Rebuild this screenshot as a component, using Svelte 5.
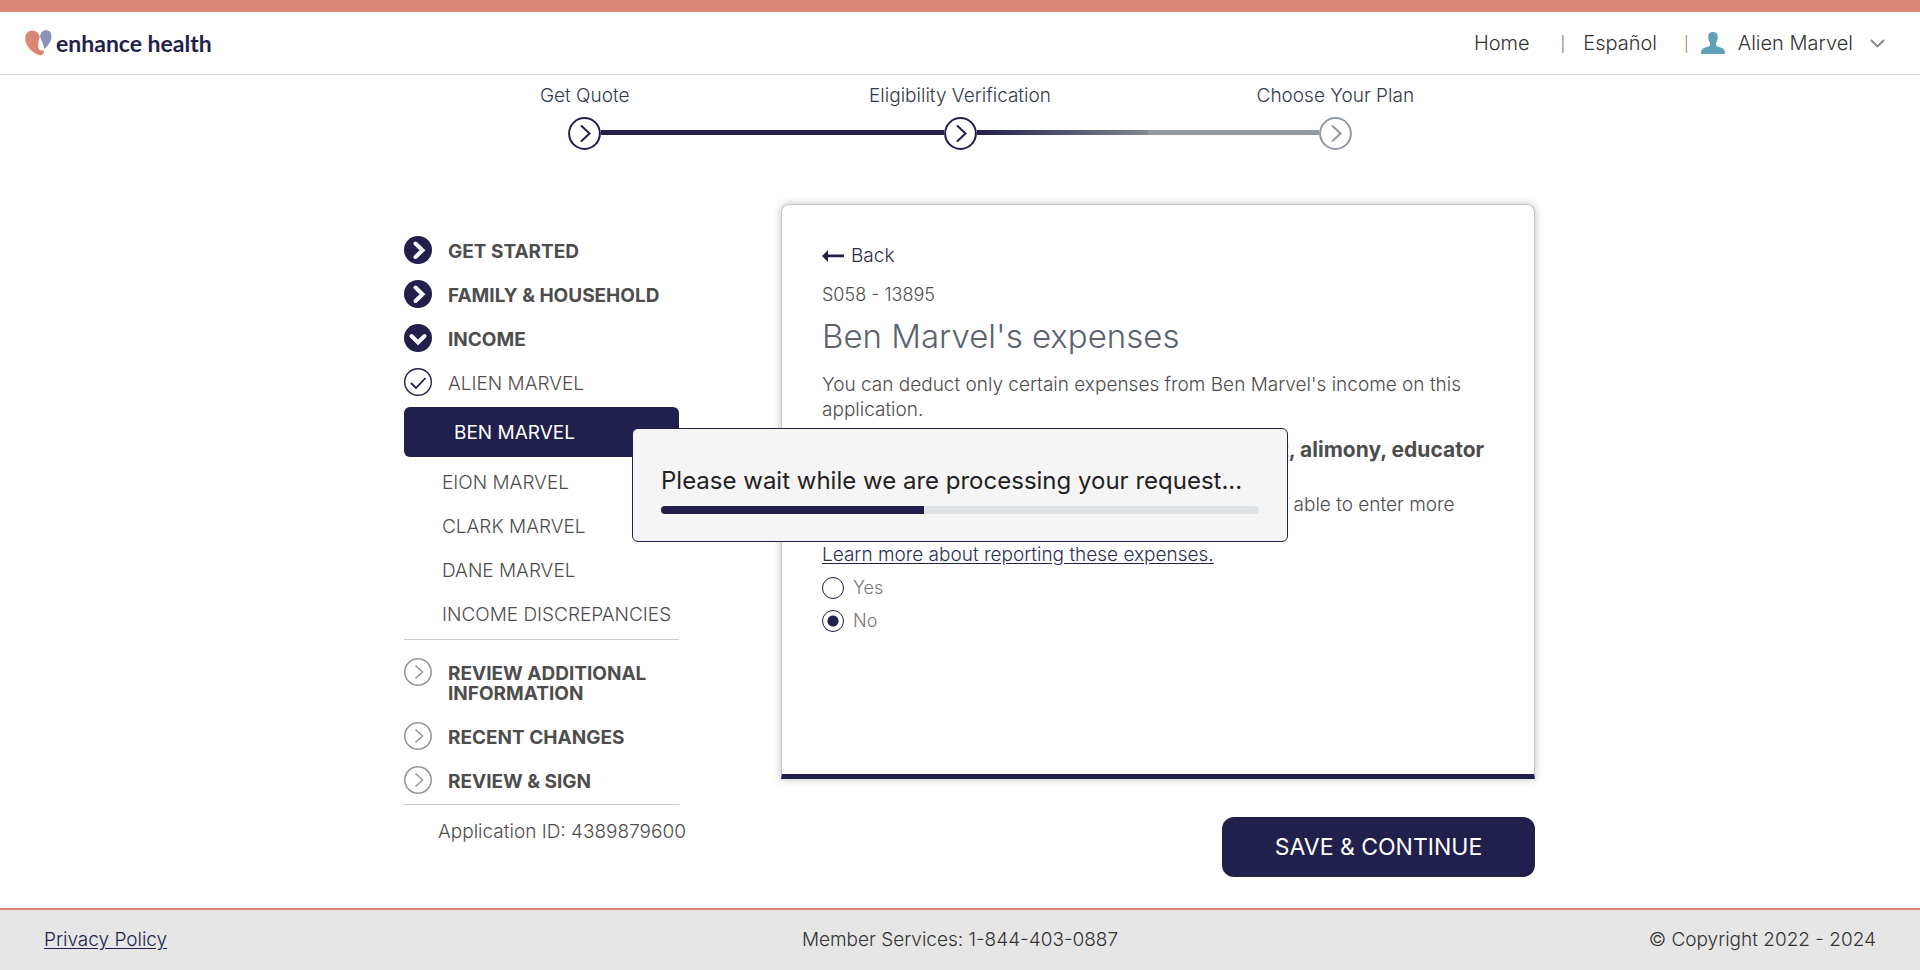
<script>
  const steps = [
    { label: 'Get Quote', state: 'done' },
    { label: 'Eligibility Verification', state: 'current' },
    { label: 'Choose Your Plan', state: 'todo' }
  ];
  const doneSections = [
    { label: 'GET STARTED', open: false },
    { label: 'FAMILY & HOUSEHOLD', open: false },
    { label: 'INCOME', open: true }
  ];
  const members = ['EION MARVEL', 'CLARK MARVEL', 'DANE MARVEL', 'INCOME DISCREPANCIES'];
  const nextSections = ['REVIEW ADDITIONAL INFORMATION', 'RECENT CHANGES', 'REVIEW & SIGN'];
  const progress = 44;
  let answer = $state('no');
</script>

<div class="page">
  <header class="header">
    <a class="logo" href="#home">
      <svg width="27" height="26" viewBox="0 0 27 26" aria-hidden="true">
        <path d="M7.500 .5C3 .5 .2 3.800 .2 8.500C.2 15.500 7 23 14 25C17.500 25.900 19.500 24 18.800 19.800C17.500 21 15.500 21 14 19C12 15.500 14 11 14.800 6.500C13.500 2.500 11 .5 7.500 .5Z" fill="#da8675" />
        <path d="M21 .2C17.500 .2 15.600 2.500 15 6.500C16.500 10.500 18.500 14 19.200 19C23.500 15.500 26.500 11 26.500 6C26.500 2.500 24.500 .2 21 .2Z" fill="#8b91b7" />
      </svg>
      <span>enhance health</span>
    </a>
    <nav class="top-nav" aria-label="Account">
      <a href="#home">Home</a>
      <span class="bar">|</span>
      <a href="#es">Español</a>
      <span class="bar second">|</span>
      <button class="user" type="button">
        <svg width="24" height="22" viewBox="0 0 24 22" aria-hidden="true">
          <path d="M12 0C8.800 0 7.200 1.800 7.200 4.800C7.200 7.500 8 9.500 9 10.800V13.200C8.800 14 7.800 14.300 6.500 14.800C3 16 .3 16.600 0 20.200V22H24V20.200C23.700 16.600 21 16 17.500 14.800C16.200 14.300 15.200 14 15 13.200V10.800C16 9.500 16.800 7.500 16.800 4.800C16.800 1.800 15.200 0 12 0Z" fill="#63a1b9" />
        </svg>
        <span>Alien Marvel</span>
        <svg width="15" height="9" viewBox="0 0 15 9" aria-hidden="true">
          <path d="M1 1L7.500 7.400L14 1" fill="none" stroke="#888" stroke-width="2" />
        </svg>
      </button>
    </nav>
  </header>

  <main class="main">
    <ol class="steps">
      {#each steps as step}
        <li class="step {step.state}">
          <span class="step-label">{step.label}</span>
          <div class="track">
            <i class="line before"></i>
            <svg width="33" height="33" viewBox="0 0 33 33" aria-hidden="true">
              <circle cx="16.500" cy="16.500" r="15.400" fill="#fff" stroke="currentColor" stroke-width="2" />
              <path d="M13.500 9L21.500 16.500L13.500 24" fill="none" stroke="currentColor" stroke-width="2" stroke-linecap="round" />
            </svg>
            <i class="line after"></i>
          </div>
        </li>
      {/each}
    </ol>

    <div class="content">
      <nav class="sidebar" aria-label="Application sections">
        <ul class="group">
          {#each doneSections as section}
            <li>
              <a class="row section" href="#section">
                <svg width="28" height="28" viewBox="0 0 28 28" aria-hidden="true">
                  <circle cx="14" cy="14" r="14" fill="#211f4b" />
                  <path d={section.open ? 'M7.500 12L14 18.500L20.500 12' : 'M11.500 7.500L18.500 14.300L11.500 21'} fill="none" stroke="#fff" stroke-width="4" stroke-linecap="round" />
                </svg>
                <span>{section.label}</span>
              </a>
            </li>
          {/each}
          <li>
            <a class="row" href="#member">
              <svg width="28" height="28" viewBox="0 0 28 28" aria-hidden="true">
                <circle cx="14" cy="14" r="13.300" fill="#fff" stroke="#211f4b" stroke-width="1.400" />
                <path d="M7 15L12 20L21.500 10" fill="none" stroke="#211f4b" stroke-width="1.800" />
              </svg>
              <span>ALIEN MARVEL</span>
            </a>
          </li>
          <li><a class="active" href="#member" aria-current="page">BEN MARVEL</a></li>
          {#each members as member}
            <li><a class="member" href="#member">{member}</a></li>
          {/each}
        </ul>
        <ul class="group upcoming">
          {#each nextSections as label}
            <li>
              <a class="row section" href="#section">
                <svg width="28" height="28" viewBox="0 0 28 28" aria-hidden="true">
                  <circle cx="14" cy="14" r="13.200" fill="#fff" stroke="#999" stroke-width="1.600" />
                  <path d="M11.500 7.500L18.500 14L11.500 20.500" fill="none" stroke="#999" stroke-width="1.600" />
                </svg>
                <span>{label}</span>
              </a>
            </li>
          {/each}
        </ul>
        <p class="app-id">Application ID: 4389879600</p>
      </nav>

      <form class="form" onsubmit={(e) => e.preventDefault()}>
        <section class="card">
          <a class="back" href="#back">
            <svg width="22" height="12" viewBox="0 0 22 12" aria-hidden="true">
              <path d="M0 6L6 0V4.600H22V7.200H6V12Z" fill="#211f4b" />
            </svg>
            Back
          </a>
          <p class="code">S058 - 13895</p>
          <h1>Ben Marvel's expenses</h1>
          <p class="text">You can deduct only certain expenses from Ben Marvel's income on this application.</p>
          <p class="question" id="question">Does Ben Marvel pay for student loan interest, alimony, educator expenses, or moving costs?</p>
          <p class="text">If Ben Marvel pays for any other deductions you'll be able to enter more expenses later.</p>
          <a class="learn" href="#learn">Learn more about reporting these expenses.</a>
          <div class="options" role="radiogroup" aria-labelledby="question">
            <label><input type="radio" name="expenses" value="yes" bind:group={answer} />Yes</label>
            <label><input type="radio" name="expenses" value="no" bind:group={answer} />No</label>
          </div>
        </section>
        <button class="save" type="submit">SAVE &amp; CONTINUE</button>
      </form>
    </div>
  </main>

  <footer class="footer">
    <a href="#privacy">Privacy Policy</a>
    <span>Member Services: 1-844-403-0887</span>
    <span class="copy">© Copyright 2022 - 2024</span>
  </footer>

  <div class="overlay">
    <div class="dialog" role="dialog" aria-labelledby="wait">
      <p id="wait">Please wait while we are processing your request...</p>
      <div class="progress" role="progressbar" aria-valuenow={progress} aria-labelledby="wait">
        <div class="fill" style="width: {progress}%"></div>
      </div>
    </div>
  </div>
</div>

<style>
  :global(body) { background: #fff; }
  .page {
    --navy: #211f4b;
    --coral: #da8675;
    min-height: 100vh;
    display: flex;
    flex-direction: column;
    box-sizing: border-box;
    border-top: 12px solid var(--coral);
    font: 300 19px/25px Inter, "Open Sans", sans-serif;
    color: #4d4d4d;
  }
  .page *, .page { box-sizing: border-box; }
  a { color: inherit; text-decoration: none; }
  p, h1, ul, ol { margin: 0; padding: 0; }
  ul, ol { list-style: none; }
  button { font: inherit; color: inherit; border: 0; background: none; padding: 0; cursor: pointer; }
  svg { flex: none; display: block; }

  .header {
    display: flex;
    justify-content: space-between;
    align-items: center;
    height: 63px;
    padding: 0 35px 0 25px;
    border-bottom: 1px solid #d6d6d6;
  }
  .logo { display: flex; align-items: center; gap: 4px; font: 700 23px/28px Lato, sans-serif; color: var(--navy); }
  .top-nav { display: flex; align-items: center; color: #333; font-size: 20px; }
  .bar { margin: 0 18px 0 31px; color: #4a6f94; font-size: 15px; }
  .bar.second { margin: 0 12px 0 27px; color: #a8742d; }
  .user { display: flex; align-items: center; gap: 13px; }
  .user span { margin-right: 4px; }

  .main { flex: 1; }
  .steps { display: flex; justify-content: center; max-width: 1126px; margin: 0 auto; padding-top: 8px; color: #333a4d; }
  .step { flex: 1; text-align: center; }
  .step-label { display: block; line-height: 26px; margin-bottom: 8px; }
  .track { display: flex; align-items: center; color: var(--navy); }
  .line { flex: 1; height: 5px; margin-bottom: 2px; }
  .done .after, .current .before { background: var(--navy); }
  .current .after { background: linear-gradient(to right, var(--navy), #808890); }
  .todo .before { background: #9299a3; }
  .todo .track { color: #9299a3; }

  .content {
    display: grid;
    grid-template-columns: 275px minmax(0, 754px);
    justify-content: space-between;
    align-items: start;
    gap: 40px;
    max-width: 1150px;
    margin: 0 auto;
    padding: 54px 0 31px 19px;
  }
  .sidebar { padding-top: 24px; }
  .group { padding-bottom: 2px; border-bottom: 1px solid #ccc; }
  .upcoming { padding-top: 10px; }
  .row { display: flex; align-items: flex-start; gap: 16px; padding: 8px 0; }
  .row span { padding: 6px 0 2px; line-height: 20px; }
  .section { font-weight: 700; }
  .active {
    display: block;
    margin: 3px 0 4px;
    padding: 13px 50px 12px;
    border-radius: 6px;
    background: var(--navy);
    color: #fff;
    font-weight: 400;
  }
  .member { display: block; padding: 9px 0 10px 38px; white-space: nowrap; }
  .app-id { padding: 14px 0 0 34px; white-space: nowrap; }

  .form { display: flex; flex-direction: column; }
  .card {
    display: flex;
    flex-direction: column;
    align-items: flex-start;
    min-height: 575px;
    padding: 38px 39px 20px 40px;
    border: 1px solid #c4c4c4;
    border-bottom: 5px solid var(--navy);
    border-radius: 8px 8px 0 0;
    box-shadow: 0 0 8px rgba(0, 0, 0, 0.25);
  }
  .back { display: flex; align-items: center; gap: 7px; color: #302c4c; }
  .code { margin-top: 14px; font-size: 18px; }
  h1 { margin: 9px 0 16px; font-size: 33px; line-height: 40px; font-weight: 300; color: #5a6270; }
  .question { margin: 15px 0 5px; font-size: 21px; font-weight: 700; }
  .text { max-width: 665px; }
  .learn { color: #2b3153; text-decoration: underline; text-decoration-color: var(--navy); text-underline-offset: 2px; }
  .options { display: grid; gap: 8px; margin-top: 8px; color: #777; font-size: 18px; }
  .options label { display: flex; align-items: center; gap: 9px; }
  .options input {
    appearance: none;
    width: 22px;
    height: 22px;
    margin: 0;
    border: 1px solid var(--navy);
    border-radius: 50%;
  }
  .options input:checked { background: radial-gradient(circle, var(--navy) 5px, transparent 6px); }
  .save {
    align-self: flex-end;
    width: 313px;
    max-width: 100%;
    margin-top: 38px;
    padding: 18px 20px 17px;
    border-radius: 12px;
    background: var(--navy);
    color: #fff;
    font-size: 23px;
    font-weight: 400;
  }

  .footer {
    display: grid;
    grid-template-columns: 1fr auto 1fr;
    padding: 17px 44px 18px;
    border-top: 2px solid var(--coral);
    background: #e6e6e6;
    color: #333;
  }
  .footer a { justify-self: start; color: var(--navy); text-decoration: underline; text-underline-offset: 2px; }
  .copy { text-align: right; }

  .overlay { position: fixed; inset: 0; display: flex; align-items: center; justify-content: center; }
  .dialog {
    width: 656px;
    max-width: 96%;
    padding: 37px 28px 27px;
    border: 1px solid var(--navy);
    border-radius: 6px;
    background: #f5f5f5;
    color: #222;
  }
  .dialog p { margin-bottom: 10px; font-size: 24px; line-height: 30px; font-weight: 400; }
  .progress { height: 8px; border-radius: 4px; overflow: hidden; background: #dee2e6; }
  .fill { height: 100%; background: var(--navy); }
</style>
